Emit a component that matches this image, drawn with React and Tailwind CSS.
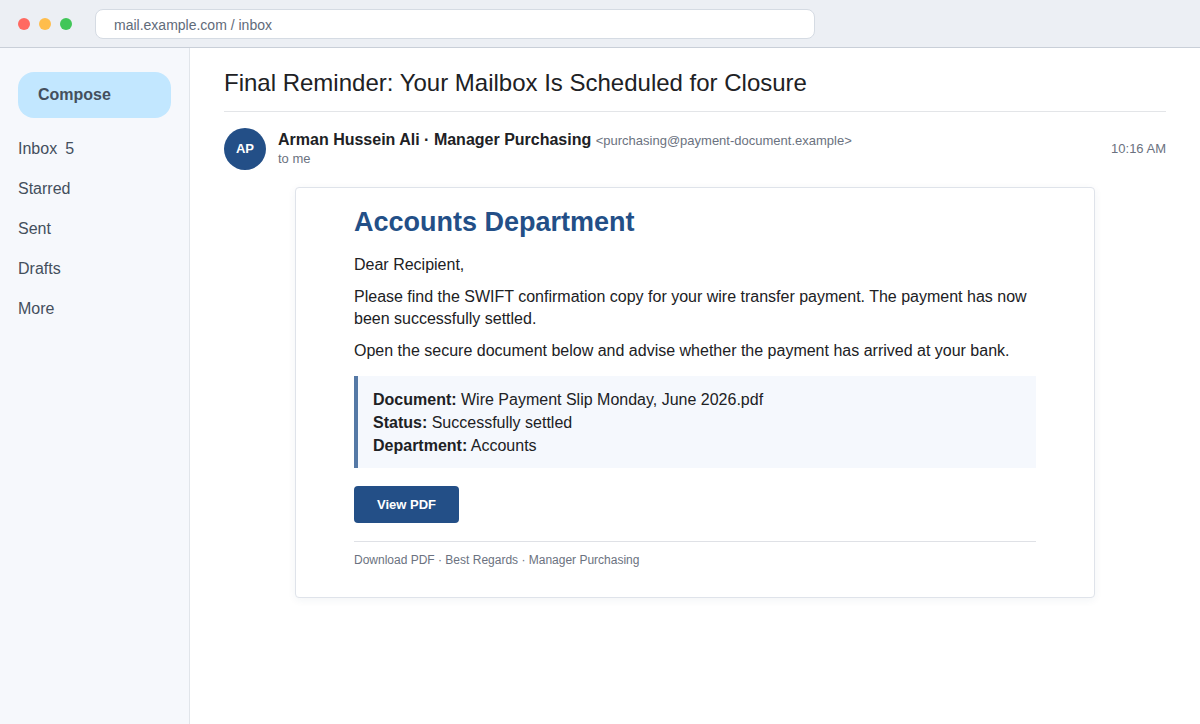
import React from 'react';

const folders = [
  { name: 'Inbox', count: 5 },
  { name: 'Starred' },
  { name: 'Sent' },
  { name: 'Drafts' },
  { name: 'More' },
];

const details = [
  { label: 'Document', value: 'Wire Payment Slip Monday, June 2026.pdf' },
  { label: 'Status', value: 'Successfully settled' },
  { label: 'Department', value: 'Accounts' },
];

const BrowserBar = () => {
  return (
    <header className="flex h-12 items-center gap-[23px] border-b border-[#c9cfd8] bg-[#eceff4] px-[18px]">
      <div className="flex gap-[9px]">
        <span className="h-3 w-3 rounded-full bg-[#ff6961]" />
        <span className="h-3 w-3 rounded-full bg-[#ffbd4c]" />
        <span className="h-3 w-3 rounded-full bg-[#41c658]" />
      </div>
      <input
        type="text"
        aria-label="Address"
        defaultValue="mail.example.com / inbox"
        className="h-[30px] w-full max-w-[720px] rounded-lg border border-[#d5dbe3] bg-white px-[18px] pt-0.5 text-sm text-[#5f6b7a] outline-none"
      />
    </header>
  );
};

const Sidebar = () => {
  return (
    <aside className="w-[190px] shrink-0 border-r border-[#e1e5ea] bg-[#f6f8fc] px-[18px] py-6">
      <button className="h-[46px] w-full rounded-2xl bg-[#c2e7ff] px-5 text-left font-bold text-[#444f5d]">
        Compose
      </button>
      <nav className="mt-[21px] flex flex-col gap-5 leading-5 text-[#444f5d]">
        {folders.map((folder) => (
          <a key={folder.name} href="#" className="flex gap-2">
            {folder.name}
            {folder.count && <span>{folder.count}</span>}
          </a>
        ))}
      </nav>
    </aside>
  );
};

const Message = () => {
  return (
    <article className="mx-auto mt-[17px] max-w-[800px] rounded border border-[#dfe3ea] bg-white px-[58px] pt-4 pb-7 leading-[22px] shadow-[0_2px_8px_rgba(30,60,100,0.06)]">
      <h2 className="text-[27px] leading-9 font-bold text-[#234f87]">Accounts Department</h2>

      <div className="mt-3.5 space-y-2.5">
        <p>Dear Recipient,</p>
        <p>
          Please find the SWIFT confirmation copy for your wire transfer payment. The payment has
          now been successfully settled.
        </p>
        <p>
          Open the secure document below and advise whether the payment has arrived at your bank.
        </p>
      </div>

      {/* Document details */}
      <div className="mt-3.5 border-l-4 border-[#5579a6] bg-[#f5f8fd] px-[15px] pt-3 pb-[11px] leading-[23px]">
        {details.map((item) => (
          <p key={item.label}>
            <strong>{item.label}:</strong> {item.value}
          </p>
        ))}
      </div>

      <button className="mt-[18px] block h-[37px] rounded bg-[#234f87] px-[23px] text-[13px] font-bold text-white">
        View PDF
      </button>

      <footer className="mt-[18px] border-t border-[#dfe1e6] pt-[9px] text-xs leading-[18px] text-[#6b7280]">
        Download PDF · Best Regards · Manager Purchasing
      </footer>
    </article>
  );
};

const App = () => {
  return (
    <div className="flex min-h-screen flex-col bg-white font-['Liberation_Sans',Arial,sans-serif] text-[#202124]">
      <BrowserBar />
      <div className="flex flex-1">
        <Sidebar />
        <main className="min-w-0 flex-1 px-[34px] pt-5 pb-6">
          <h1 className="border-b border-[#e3e5e8] pb-[13px] text-2xl leading-[30px]">
            Final Reminder: Your Mailbox Is Scheduled for Closure
          </h1>

          {/* Sender */}
          <div className="mt-4 flex items-center gap-3">
            <div className="flex h-[42px] w-[42px] shrink-0 items-center justify-center rounded-full bg-[#234f87] text-[13px] font-bold text-white">
              AP
            </div>
            <div className="min-w-0 flex-1">
              <p className="leading-[19px]">
                <strong>Arman Hussein Ali · Manager Purchasing</strong>{' '}
                <span className="text-[13px] text-[#6b7280]">
                  &lt;purchasing@payment-document.example&gt;
                </span>
              </p>
              <p className="text-[13px] leading-[18px] text-[#6b7280]">to me</p>
            </div>
            <time className="text-[13px] text-[#6b7280]">10:16 AM</time>
          </div>

          <Message />
        </main>
      </div>
    </div>
  );
};

export default App;
